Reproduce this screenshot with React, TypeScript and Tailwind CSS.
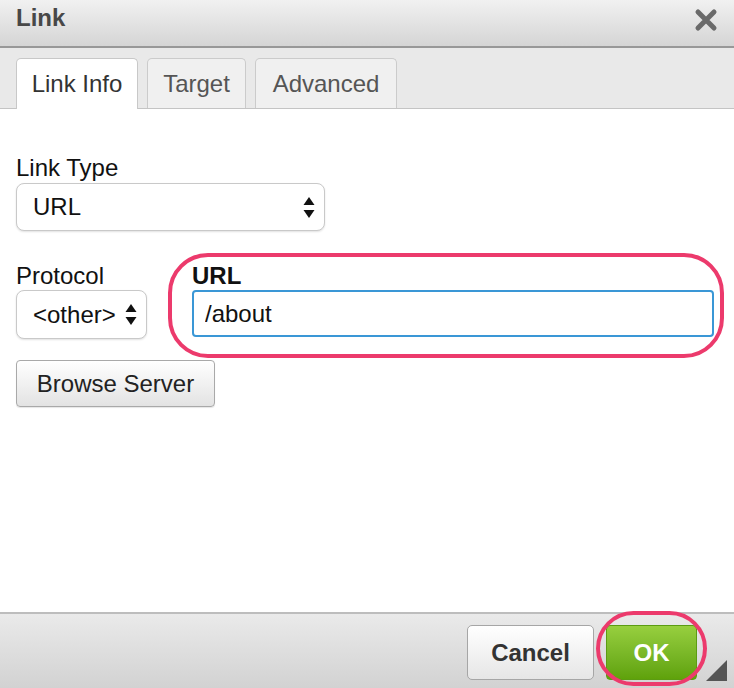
import { useState } from "react";

const tabs = [
  { label: "Link Info", w: "w-[122px]" },
  { label: "Target", w: "w-[99px]" },
  { label: "Advanced", w: "w-[142px]" },
];

function UpDown({ className = "" }: { className?: string }) {
  return (
    <svg width="12" height="21" viewBox="0 0 12 21" className={className}>
      <path d="M6 0 L11.5 8 L0.5 8 Z" fill="#111" />
      <path d="M6 21 L11.5 13 L0.5 13 Z" fill="#111" />
    </svg>
  );
}

export default function App() {
  const [active, setActive] = useState(0);
  const [url, setUrl] = useState("/about");

  return (
    <div className="flex h-[688px] w-[734px] flex-col overflow-hidden bg-white font-['Liberation_Sans',Arial,sans-serif] text-[24px] text-[#111]">
      {/* title bar */}
      <header className="flex h-[48px] shrink-0 items-start justify-between border-b-2 border-[#989898] bg-gradient-to-b from-[#f1f1f1] to-[#d5d5d5] pl-4 pr-4 pt-[4px]">
        <h1 className="text-[24px] font-bold leading-[28px] text-[#474747]">Link</h1>
        <button type="button" className="mt-[4px] flex h-[24px] w-[24px] items-center justify-center">
          <svg width="24" height="24" viewBox="0 0 24 24">
            <path d="M4 4 L20 20 M20 4 L4 20" stroke="#6a6a6a" strokeWidth="5" strokeLinecap="round" />
          </svg>
        </button>
      </header>

      {/* tabs */}
      <nav className="flex h-[61px] shrink-0 items-end gap-[9px] border-b border-[#c4c4c4] bg-[#e9e9e9] px-4">
        {tabs.map((t, i) => (
          <button
            key={t.label}
            type="button"
            onClick={() => setActive(i)}
            className={`relative flex items-center justify-center rounded-t-[5px] border border-b-0 leading-none ${t.w} ${
              i === active ? "z-10 -mb-px h-[51px] border-[#c8c8c8] bg-white text-[#333]" : "h-[50px] border-[#cbcbcb] bg-[#f0f0f0] text-[#555]"
            }`}
          >
            {t.label}
          </button>
        ))}
      </nav>

      {/* body */}
      <main className="flex-1 px-4 pt-[45px]">
        <label className="block h-[28px] leading-[28px]">Link Type</label>
        <div className="mt-px flex h-[48px] w-[309px] items-center justify-between rounded-[8px] border border-[#c9c9c9] bg-white pl-4 pr-[9px] shadow-[0_1px_2px_rgba(0,0,0,0.12)]">
          <span>URL</span>
          <UpDown />
        </div>

        <div className="mt-[31px] flex gap-[45px]">
          <div className="flex flex-col">
            <label className="h-[28px] leading-[28px]">Protocol</label>
            <div className="flex h-[49px] w-[131px] items-center justify-between rounded-[8px] border border-[#c9c9c9] bg-white pl-4 pr-[9px] shadow-[0_1px_2px_rgba(0,0,0,0.12)]">
              <span>&lt;other&gt;</span>
              <UpDown />
            </div>
          </div>
          <div className="relative flex flex-1 flex-col pr-[4px]">
            <label className="h-[28px] font-bold leading-[28px]">URL</label>
            <input
              value={url}
              onChange={(e) => setUrl(e.target.value)}
              className="h-[47px] w-full rounded-[4px] border-2 border-[#3a97d6] px-[11px] text-[24px] outline-none"
            />
            <div className="pointer-events-none absolute left-[-24px] right-[-6px] top-[-9px] h-[105px] rounded-[40px] border-[4px] border-[#ec3a6c]" />
          </div>
        </div>

        <button
          type="button"
          className="mt-[21px] h-[47px] w-[199px] rounded-[4px] border border-[#a9a9a9] bg-gradient-to-b from-white to-[#e3e3e3] text-[#222] shadow-[0_1px_1px_rgba(0,0,0,0.1)]"
        >
          Browse Server
        </button>
      </main>

      {/* footer */}
      <footer className="relative flex h-[76px] shrink-0 items-start justify-end gap-[12px] border-t-2 border-[#bdbdbd] bg-gradient-to-b from-[#eaeaea] to-[#d2d2d2] pr-[37px] pt-[11px]">
        <button
          type="button"
          className="h-[55px] w-[127px] rounded-[5px] border border-[#a6a6a6] bg-gradient-to-b from-white to-[#e6e6e6] font-bold text-[#333]"
        >
          Cancel
        </button>
        <div className="relative">
          <button
            type="button"
            className="h-[55px] w-[91px] rounded-[4px] border border-[#5c9c12] bg-gradient-to-b from-[#97cf3e] to-[#5fa20a] font-bold text-white"
          >
            OK
          </button>
          <div className="pointer-events-none absolute left-[-10px] right-[-10px] top-[-14px] bottom-[-6px] rounded-[38px] border-[4px] border-[#ec3a6c]" />
        </div>
        <svg width="21" height="21" viewBox="0 0 21 21" className="absolute bottom-[7px] right-[7px]">
          <path d="M21 0 L21 21 L0 21 Z" fill="#555" />
        </svg>
      </footer>
    </div>
  );
}
